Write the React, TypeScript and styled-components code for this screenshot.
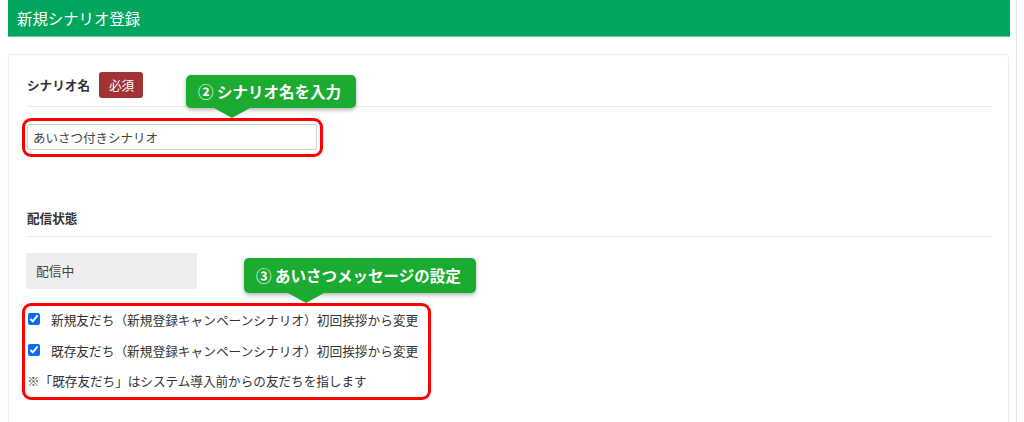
import styled, { createGlobalStyle } from "styled-components";

const GlobalStyle = createGlobalStyle`
  html, body {
    margin: 0;
    padding: 0;
    background: #fff;
  }
  body {
    font-family: "Noto Sans CJK JP", "Noto Sans", sans-serif;
    color: #333;
  }
  * { box-sizing: border-box; }
`

const Frame = styled.div`
  width: 1017px;
  min-height: 100vh;
  padding: 0 6px 0 8px;
  border-right: 1px solid #e4e4e4;
`
const Header = styled.div`
  height: 37px;
  background: #00a65d;
  border-bottom: 1px solid #4fcb8e;
  color: #fff;
  font-size: 15.4px;
  line-height: 36px;
  padding-left: 9px;
`
const Card = styled.div`
  margin: 17px 1px 0 0;
  border: 1px solid #ececec;
  border-radius: 4px;
  box-shadow: 0 1px 2px rgba(0, 0, 0, .04);
  padding: 17px 16px 40px 18px;
  min-height: 400px;
`
const Section = styled.div<{ $gap?: number }>`
  position: relative;
  margin-top: ${({ $gap }) => $gap ?? 0}px;
`
const FieldHeader = styled.div`
  display: flex;
  align-items: center;
  gap: 9px;
  padding-bottom: 8px;
  border-bottom: 1px solid #ebebeb;
`
const Label = styled.span`
  font-size: 12.6px;
  font-weight: 700;
  line-height: 20px;
  color: #333;
`
const Badge = styled.span`
  background: #a33234;
  color: #fff;
  font-size: 12.6px;
  line-height: 26px;
  height: 26px;
  padding: 0 9px 0 10px;
  border-radius: 3px;
`
const Highlight = styled.div<{ $top: number; $right: number }>`
  width: fit-content;
  margin: ${({ $top }) => $top}px 0 0 -5px;
  border: 3px solid #ff0000;
  border-radius: 9px;
  padding: 3px ${({ $right }) => $right}px 4px 2px;
`
const TextInput = styled.input`
  display: block;
  width: 290px;
  height: 26px;
  border: 1px solid #cfcfcf;
  border-radius: 2px;
  padding: 0 5px;
  font-family: inherit;
  font-size: 12.5px;
  color: #444;
  outline: none;
`
const Status = styled.div`
  width: 171px;
  height: 36px;
  margin-top: 16px;
  margin-left: -1px;
  background: #eeeeee;
  font-size: 12.8px;
  line-height: 36px;
  padding-left: 10px;
  color: #444;
`
const OptionList = styled.div`
  display: flex;
  flex-direction: column;
  gap: 11px;
  padding-bottom: 2px;
`
const CheckRow = styled.label`
  display: flex;
  align-items: center;
  gap: 11px;
  height: 20px;
  font-size: 12.7px;
  color: #333;
`
const Check = styled.input`
  width: 12px;
  height: 12px;
  margin: 0 0 0 1px;
  accent-color: #0a6cf5;
`
const Note = styled.div`
  font-size: 12.6px;
  line-height: 20px;
  color: #333;
`
const Callout = styled.div<{ $left: number; $top: number; $arrow: number; $h: number }>`
  position: absolute;
  left: ${({ $left }) => $left}px;
  top: ${({ $top }) => $top}px;
  height: ${({ $h }) => $h}px;
  line-height: ${({ $h }) => $h}px;
  padding: 0 15px 0 12px;
  background: #1aab30;
  color: #fff;
  font-size: 15.5px;
  font-weight: 700;
  white-space: nowrap;
  border-radius: 5px;
  box-shadow: 0 2px 4px rgba(0, 0, 0, .3);
  z-index: 2;

  &::after {
    content: "";
    position: absolute;
    top: 100%;
    left: ${({ $arrow }) => $arrow - 18}px;
    border-top: 10px solid #1aab30;
    border-left: 18px solid transparent;
    border-right: 18px solid transparent;
  }
`

export default function App() {
  return (
    <>
      <GlobalStyle />
      <Frame>
        <Header>新規シナリオ登録</Header>
        <Card>
          <Section>
            <FieldHeader>
              <Label>シナリオ名</Label>
              <Badge>必須</Badge>
            </FieldHeader>
            <Highlight $top={11} $right={3}>
              <TextInput defaultValue="あいさつ付きシナリオ" />
            </Highlight>
            <Callout $left={159} $top={3} $arrow={46} $h={33}>② シナリオ名を入力</Callout>
          </Section>

          <Section $gap={51}>
            <FieldHeader>
              <Label>配信状態</Label>
            </FieldHeader>
            <Status>配信中</Status>
            <Highlight $top={14} $right={10}>
              <OptionList>
                <CheckRow>
                  <Check type="checkbox" defaultChecked />
                  新規友だち（新規登録キャンペーンシナリオ）初回挨拶から変更
                </CheckRow>
                <CheckRow>
                  <Check type="checkbox" defaultChecked />
                  既存友だち（新規登録キャンペーンシナリオ）初回挨拶から変更
                </CheckRow>
                <Note>※「既存友だち」はシステム導入前からの友だちを指します</Note>
              </OptionList>
            </Highlight>
            <Callout $left={217} $top={50} $arrow={62} $h={35}>③ あいさつメッセージの設定</Callout>
          </Section>
        </Card>
      </Frame>
    </>
  )
}
